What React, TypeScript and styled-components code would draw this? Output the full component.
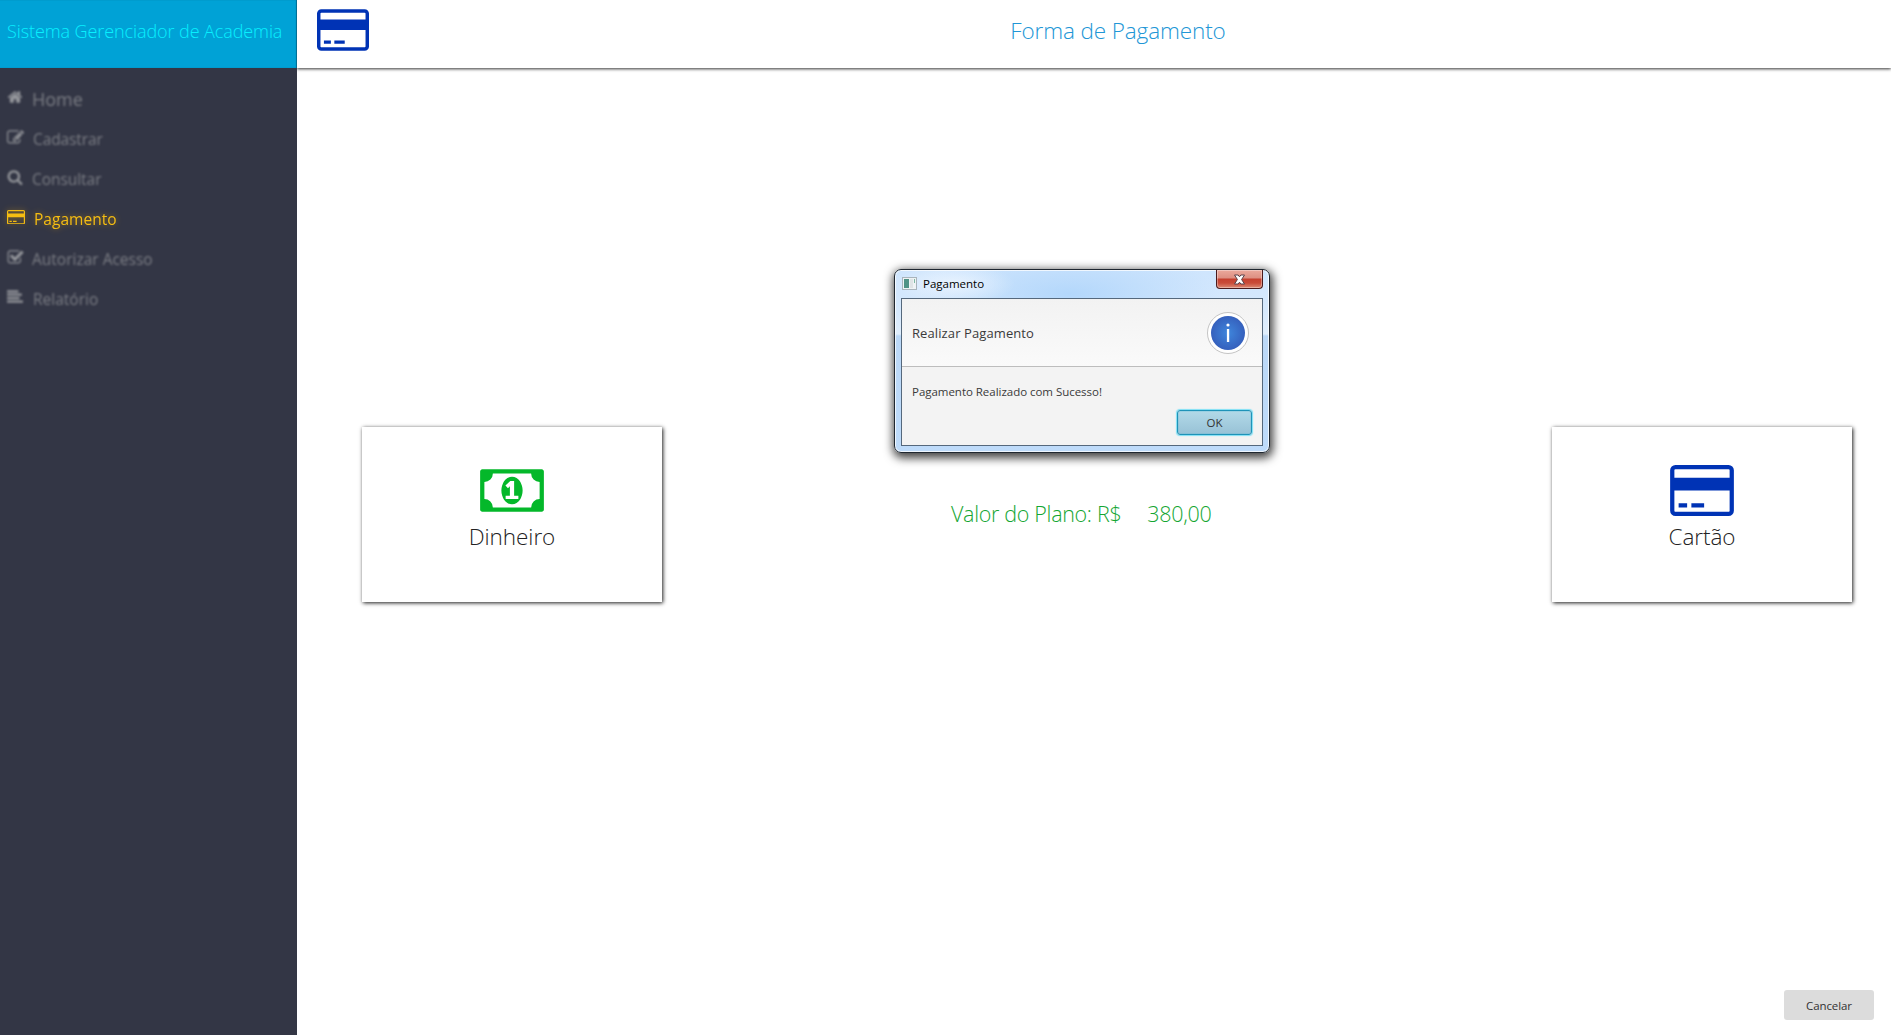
import React from "react";
import styled, { createGlobalStyle, css } from "styled-components";

const GlobalStyle = createGlobalStyle`
  *, *::before, *::after { box-sizing: border-box; }
  html, body { margin: 0; padding: 0; }
  body {
    font-family: "Open Sans", "Noto Sans", sans-serif;
    background: #fff;
    overflow: hidden;
  }
  button { font: inherit; border: 0; padding: 0; margin: 0; }
`;

/* ---------- icons ---------- */

type IconDef = { box: string; d: string };

const icons: Record<string, IconDef> = {
  home: {
    box: "0 0 1792 1792",
    d: "M1472 992v480q0 26-19 45t-45 19h-384v-384h-256v384h-384q-26 0-45-19t-19-45v-480q0-1 .5-3t.5-3l575-474 575 474q1 2 1 6zm223-69l-62 74q-8 9-21 11h-3q-13 0-21-7l-692-577-692 577q-12 8-24 7-13-2-21-11l-62-74q-8-10-7-23.5t11-21.500l719-599q32-26 76-26t76 26l244 204v-195q0-14 9-23t23-9h192q14 0 23 9t9 23v408l219 182q10 8 11 21.500t-7 23.500z",
  },
  edit: {
    box: "0 0 1792 1792",
    d: "M888 1184l116-116-152-152-116 116v56h96v96h56zm440-720q-16-16-33 1l-350 350q-17 17-1 33t33-1l350-350q17-17 1-33zm80 594v190q0 119-84.500 203.500t-203.500 84.500h-832q-119 0-203.500-84.500t-84.500-203.500v-832q0-119 84.500-203.500t203.500-84.500h832q63 0 117 25 15 7 18 23 3 17-9 29l-49 49q-14 14-32 8-23-6-45-6h-832q-66 0-113 47t-47 113v832q0 66 47 113t113 47h832q66 0 113-47t47-113v-126q0-13 9-22l64-64q15-15 35-7t20 29zm-96-738l288 288-672 672h-288v-288zm444 132l-92 92-288-288 92-92q28-28 68-28t68 28l152 152q28 28 28 68t-28 68z",
  },
  search: {
    box: "0 0 1792 1792",
    d: "M1216 832q0-185-131.500-316.500t-316.500-131.500-316.500 131.500-131.500 316.500 131.500 316.500 316.500 131.500 316.500-131.500 131.500-316.500zm512 832q0 52-38 90t-90 38q-54 0-90-38l-343-342q-179 124-399 124-143 0-273.500-55.500t-225-150-150-225-55.500-273.500 55.500-273.500 150-225 225-150 273.500-55.500 273.500 55.500 225 150 150 225 55.500 273.500q0 220-124 399l343 343q37 37 37 90z",
  },
  card: {
    box: "0 128 1920 1536",
    d: "M1760 128q66 0 113 47t47 113v1216q0 66-47 113t-113 47h-1600q-66 0-113-47t-47-113v-1216q0-66 47-113t113-47h1600zM160 256q-13 0-22.500 9.500t-9.500 22.500v224h1664v-224q0-13-9.500-22.500t-22.500-9.500h-1600zM1760 1536q13 0 22.500-9.500t9.500-22.500v-608h-1664v608q0 13 9.500 22.500t22.500 9.500h1600zM256 1408v-128h256v128h-256zM640 1408v-128h384v128h-384z",
  },
  check: {
    box: "0 0 1792 1792",
    d: "M1472 930v318q0 119-84.500 203.500t-203.500 84.500h-832q-119 0-203.500-84.500t-84.500-203.500v-832q0-119 84.500-203.500t203.500-84.500h832q63 0 117 25 15 7 18 23 3 17-9 29l-49 49q-10 10-23 10-3 0-9-2-23-6-45-6h-832q-66 0-113 47t-47 113v832q0 66 47 113t113 47h832q66 0 113-47t47-113v-254q0-13 9-22l64-64q10-10 23-10 6 0 12 3 20 8 20 29zm231-489l-814 814q-24 24-57 24t-57-24l-430-430q-24-24-24-57t24-57l110-110q24-24 57-24t57 24l263 263 647-647q24-24 57-24t57 24l110 110q24 24 24 57t-24 57z",
  },
  report: {
    box: "0 0 1792 1792",
    d: "M1792 1344v128q0 26-19 45t-45 19h-1664q-26 0-45-19t-19-45v-128q0-26 19-45t45-19h1664q26 0 45 19t19 45zm-384-384v128q0 26-19 45t-45 19h-1280q-26 0-45-19t-19-45v-128q0-26 19-45t45-19h1280q26 0 45 19t19 45zm256-384v128q0 26-19 45t-45 19h-1536q-26 0-45-19t-19-45v-128q0-26 19-45t45-19h1536q26 0 45 19t19 45zm-384-384v128q0 26-19 45t-45 19h-1152q-26 0-45-19t-19-45v-128q0-26 19-45t45-19h1152q26 0 45 19t19 45z",
  },
  money: {
    box: "0 128 1920 1536",
    d: "M768 1152h384v-96h-128v-448h-114l-148 137 77 80q42-37 55-57h2v288h-128v96zM1280 896q0 70-21 142t-59.500 134-101.500 101-138 39-138-39-101.500-101-59.500-134-21-142 21-142 59.500-134 101.500-101 138-39 138 39 101.500 101 59.500 134 21 142zM1792 1152v-512q-106 0-181-75t-75-181h-1152q0 106-75 181t-181 75v512q106 0 181 75t75 181h1152q0-106 75-181t181-75zM1920 320v1152q0 26-19 45t-45 19h-1792q-26 0-45-19t-19-45v-1152q0-26 19-45t45-19h1792q26 0 45 19t19 45z",
  },
};

const Glyph = styled.svg<{ $w: number; $h: number }>`
  display: block;
  flex: none;
  width: ${(p) => p.$w}px;
  height: ${(p) => p.$h}px;
  fill: currentColor;
`;

function Icon({ name, w, h }: { name: string; w: number; h: number }) {
  const { box, d } = icons[name];
  return (
    <Glyph viewBox={box} $w={w} $h={h} aria-hidden="true">
      <path d={d} fillRule="evenodd" />
    </Glyph>
  );
}

/* ---------- shell ---------- */

const Shell = styled.div`
  position: relative;
  display: grid;
  grid-template-columns: 297px 1fr;
  width: 1891px;
  height: 1035px;
`;

const Sidebar = styled.aside`
  display: flex;
  flex-direction: column;
  background: #333645;
`;

const Brand = styled.div`
  display: flex;
  align-items: center;
  height: 68px;
  padding: 0 0 7px 7px;
  background: #00a2d6;
  box-shadow: inset -1px 0 1px rgba(0, 40, 60, 0.45);
  color: #08f0ff;
  font-size: 18px;
  font-weight: 300;
  white-space: nowrap;
  letter-spacing: -0.09px;
`;

const Nav = styled.nav`
  display: flex;
  flex-direction: column;
  padding: 10px 0 0 7px;
`;

const NavItem = styled.a<{ $active?: boolean; $large?: boolean }>`
  display: flex;
  align-items: center;
  height: 40px;
  color: #7c7e85;
  font-size: ${(p) => (p.$large ? 18 : 15.5)}px;
  filter: blur(0.9px);
  white-space: nowrap;
  ${(p) =>
    p.$active &&
    css`
      color: #f5bd12;
      filter: drop-shadow(0 0 3px rgba(245, 170, 0, 0.45));
    `}
`;

const NavIcon = styled.span<{ $slot: number; $active?: boolean }>`
  display: flex;
  width: ${(p) => p.$slot}px;
  padding-bottom: 2px;
  color: ${(p) => (p.$active ? "inherit" : "#94969b")};
`;

const NavLabel = styled.span<{ $track: number }>`
  letter-spacing: ${(p) => p.$track}px;
  padding-top: 1px;
`;

const Main = styled.main`
  display: flex;
  flex-direction: column;
  min-width: 0;
`;

const TopBar = styled.header`
  display: grid;
  grid-template-columns: 1fr auto 1fr;
  align-items: center;
  height: 68px;
  padding: 0 20px 9px;
  color: #0033b5;
  box-shadow: 0 1px 3px rgba(0, 0, 0, 0.8);
  clip-path: inset(0 0 -6px 0);
`;

const PageTitle = styled.h1`
  margin: 0;
  padding: 2px 0 0 48px;
  color: #2196d6;
  font-size: 22.500px;
  font-weight: 300;
  letter-spacing: -0.12px;
  white-space: nowrap;
`;

const Options = styled.section`
  display: flex;
  align-items: center;
  padding: 359px 39px 0 65px;
`;

const OptionCard = styled.button<{ $tint: string }>`
  display: flex;
  flex: none;
  flex-direction: column;
  align-items: center;
  width: 300px;
  height: 175px;
  padding-top: 38px;
  background: #fff;
  box-shadow: 1px 1px 4px rgba(0, 0, 0, 0.9);
  color: ${(p) => p.$tint};
`;

const OptionLabel = styled.span`
  margin-top: 4px;
  color: #222;
  font-size: 22.500px;
  font-weight: 300;
  line-height: 34px;
  letter-spacing: -0.05px;
`;

const PlanValue = styled.div`
  display: flex;
  flex: 1;
  gap: 26px;
  padding: 0 0 1px 289px;
  color: #14a632;
  font-size: 21.500px;
  font-weight: 300;
  line-height: 30px;
  letter-spacing: -0.32px;
  white-space: nowrap;
`;

const Footer = styled.footer`
  display: flex;
  justify-content: flex-end;
  margin-top: auto;
  padding: 0 17px 15px;
`;

const CancelButton = styled.button`
  width: 90px;
  height: 30px;
  border-radius: 3px;
  background: #dcdcdc;
  color: #333;
  font-size: 11.500px;
  padding-top: 1px;
  letter-spacing: -0.1px;
`;

/* ---------- dialog window ---------- */

const Window = styled.div`
  position: absolute;
  left: 894px;
  top: 269px;
  display: flex;
  flex-direction: column;
  width: 376px;
  height: 184px;
  padding: 0 6px 6px;
  border: 1px solid #1f2730;
  border-radius: 7px;
  background:
    radial-gradient(ellipse 60px 20px at 60px 14px, rgba(240, 247, 255, 0.8) 0%, rgba(240, 247, 255, 0) 100%),
    radial-gradient(ellipse 150px 44px at 175px 24px, #b3d7fb 0%, rgba(181, 216, 250, 0) 100%),
    linear-gradient(#cfe5fd 0, #d6e9fd 40px, #e0eefc 64px, #bbd8f7 66px, #bedbfa 100%);
  box-shadow:
    inset 0 0 0 1px rgba(255, 255, 255, 0.75),
    1px 3px 10px 2px rgba(0, 0, 0, 0.75);
`;

const TitleBar = styled.div`
  display: flex;
  align-items: center;
  height: 28px;
  padding-left: 1px;
  color: #000;
`;

const AppIcon = styled.svg`
  display: block;
  width: 15px;
  height: 13px;
  margin-bottom: 1px;
`;

const WindowName = styled.span`
  flex: 1;
  padding: 0 0 2px 6px;
  font-size: 11.500px;
`;

const CloseButton = styled.button`
  display: flex;
  align-self: flex-start;
  align-items: center;
  justify-content: center;
  width: 47px;
  height: 19px;
  border: 1px solid #4a1a1c;
  border-top: 0;
  border-radius: 0 0 4px 4px;
  background: linear-gradient(#eba99c 0, #dd8f82 8px, #c5402f 9px, #c94b38 13px, #dc8a74 100%);
  box-shadow: inset 0 0 0 1px rgba(255, 255, 255, 0.35);
`;

const Pane = styled.div`
  display: flex;
  flex: 1;
  flex-direction: column;
  border: 1px solid #55687c;
  background: #f3f3f3;
`;

const PaneHeader = styled.div`
  display: flex;
  align-items: center;
  justify-content: space-between;
  height: 68px;
  padding: 0 13px 0 10px;
  border-bottom: 1px solid #bdbdbd;
  background: linear-gradient(#f2f2f2, #fafafa);
  color: #3a3a3a;
  font-size: 13px;
  letter-spacing: 0.1px;
`;

const PaneBody = styled.div`
  display: flex;
  flex: 1;
  flex-direction: column;
  justify-content: space-between;
  padding: 16px 10px 10px;
  color: #3a3a3a;
  font-size: 11.500px;
  line-height: 18px;
  letter-spacing: -0.03px;
`;

const OkButton = styled.button`
  align-self: flex-end;
  width: 75px;
  height: 25px;
  border: 1px solid #1f93b8;
  border-radius: 3px;
  background: linear-gradient(#b2d9e8, #98c2d6);
  box-shadow: 0 0 1px 1px #7fe0f5, inset 0 0 0 1px rgba(63, 178, 212, 0.2);
  color: #333;
`;

const menu = [
  { icon: "home", label: "Home", large: true, track: 0, w: 16, slot: 25 },
  { icon: "edit", label: "Cadastrar", track: -0.1, w: 17, slot: 26 },
  { icon: "search", label: "Consultar", track: -0.05, w: 16, slot: 25 },
  { icon: "card", label: "Pagamento", active: true, track: 0.02, w: 18, slot: 27 },
  { icon: "check", label: "Autorizar Acesso", track: 0, w: 17, slot: 25 },
  { icon: "report", label: "Relatório", track: 0, w: 16, slot: 26 },
];

export default function App() {
  return (
    <>
      <GlobalStyle />
      <Shell>
        <Sidebar>
          <Brand>Sistema Gerenciador de Academia</Brand>
          <Nav>
            {menu.map((m) => (
              <NavItem key={m.label} $active={m.active} $large={m.large}>
                <NavIcon $slot={m.slot} $active={m.active}>
                  <Icon name={m.icon} w={m.w} h={m.active ? 14.4 : m.w} />
                </NavIcon>
                <NavLabel $track={m.track}>{m.label}</NavLabel>
              </NavItem>
            ))}
          </Nav>
        </Sidebar>
        <Main>
          <TopBar>
            <Icon name="card" w={52} h={42} />
            <PageTitle>Forma de Pagamento</PageTitle>
            <span />
          </TopBar>
          <Options>
            <OptionCard $tint="#04b82a">
              <Icon name="money" w={64} h={51} />
              <OptionLabel>Dinheiro</OptionLabel>
            </OptionCard>
            <PlanValue>
              <span>Valor do Plano: R$</span>
              <span>380,00</span>
            </PlanValue>
            <OptionCard $tint="#0033b5">
              <Icon name="card" w={64} h={51} />
              <OptionLabel>Cartão</OptionLabel>
            </OptionCard>
          </Options>
          <Footer>
            <CancelButton>Cancelar</CancelButton>
          </Footer>
        </Main>
        <Window role="dialog">
          <TitleBar>
            <AppIcon viewBox="0 0 15 13">
              <rect x="0.5" y="0.5" width="14" height="12" fill="#eef3f5" stroke="#a9b4bc" />
              <rect x="2" y="2" width="5" height="9" fill="#4f9386" />
              <rect x="8" y="2" width="3" height="9" fill="#dfe4e6" />
              <rect x="12" y="2" width="1" height="4" fill="#7fb9a4" />
            </AppIcon>
            <WindowName>Pagamento</WindowName>
            <CloseButton aria-label="Fechar">
              <svg width="13" height="11" viewBox="0 0 13 11">
                <path
                  d="M1.500 1h3.600l1.400 1.800L7.900 1h3.600L8.600 5.500 11.500 10H7.900L6.500 8.200 5.100 10H1.500l2.900-4.500z"
                  fill="#fff"
                  stroke="#5a4148"
                  strokeWidth="1"
                  strokeLinejoin="round"
                />
              </svg>
            </CloseButton>
          </TitleBar>
          <Pane>
            <PaneHeader>
              <span>Realizar Pagamento</span>
              <svg width="42" height="42" viewBox="0 0 42 42">
                <defs>
                  <radialGradient id="info">
                    <stop offset="0" stopColor="#3f86dc" />
                    <stop offset="1" stopColor="#3560bd" />
                  </radialGradient>
                </defs>
                <circle cx="21" cy="21" r="20.500" fill="#fff" stroke="#c4c4c4" />
                <circle cx="21" cy="21" r="17" fill="url(#info)" />
                <circle cx="21" cy="13" r="1.600" fill="#fff" />
                <rect x="19.900" y="17" width="2.300" height="13" fill="#fff" />
              </svg>
            </PaneHeader>
            <PaneBody>
              <span>Pagamento Realizado com Sucesso!</span>
              <OkButton>OK</OkButton>
            </PaneBody>
          </Pane>
        </Window>
      </Shell>
    </>
  );
}
